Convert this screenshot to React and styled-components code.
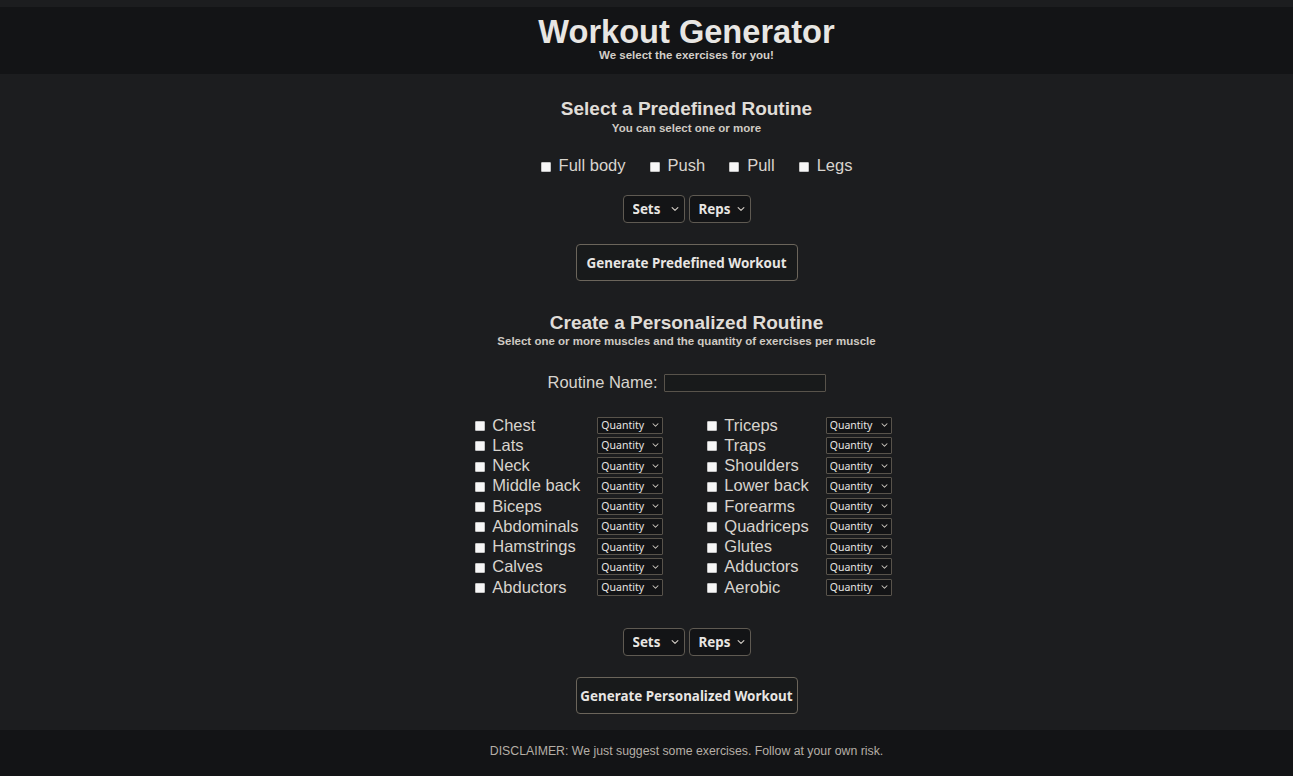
import React from "react";
import styled, { createGlobalStyle } from "styled-components";

const GlobalStyle = createGlobalStyle`
  html, body {
    margin: 0;
    padding: 0;
    background: #1c1d1f;
  }

  body {
    font-family: "Liberation Sans", Arial, sans-serif;
    color: #d8d4ce;
  }

  * {
    box-sizing: border-box;
  }
`;

const PREDEFINED = ["Full body", "Push", "Pull", "Legs"];

const LEFT_MUSCLES = [
  "Chest",
  "Lats",
  "Neck",
  "Middle back",
  "Biceps",
  "Abdominals",
  "Hamstrings",
  "Calves",
  "Abductors",
];

const RIGHT_MUSCLES = [
  "Triceps",
  "Traps",
  "Shoulders",
  "Lower back",
  "Forearms",
  "Quadriceps",
  "Glutes",
  "Adductors",
  "Aerobic",
];

const Chevron = ({ size = 8 }) => (
  <svg width={size} height={size * 0.6} viewBox="0 0 8 5" fill="none">
    <polyline points="1,1 4,4 7,1" stroke="#cfcac3" strokeWidth="1.2" strokeLinecap="round" strokeLinejoin="round" />
  </svg>
);

const Dropdown = ({ label, options, small }) => (
  <SelectBox $small={small}>
    <NativeSelect $small={small} defaultValue="">
      <option value="">{label}</option>
      {options.map((o) => (
        <option key={o} value={o}>
          {o}
        </option>
      ))}
    </NativeSelect>
    <ChevronSlot $small={small}>
      <Chevron size={small ? 7 : 8} />
    </ChevronSlot>
  </SelectBox>
);

const SetsReps = ({ top }) => (
  <SelectRow $top={top}>
    <Dropdown label="Sets" options={["1", "2", "3", "4", "5"]} />
    <Dropdown label="Reps" options={["5", "8", "10", "12", "15"]} />
  </SelectRow>
);

const MuscleColumn = ({ muscles }) => (
  <MuscleList>
    {muscles.map((m) => (
      <React.Fragment key={m}>
        <CheckLabel $gap={7}>
          <Checkbox type="checkbox" />
          {m}
        </CheckLabel>
        <Dropdown label="Quantity" options={["1", "2", "3", "4"]} small />
      </React.Fragment>
    ))}
  </MuscleList>
);

export default function App() {
  return (
    <>
      <GlobalStyle />
      <Page>
        <Header>
          <Title>Workout Generator</Title>
          <Tagline>We select the exercises for you!</Tagline>
        </Header>

        <Main>
          <SectionTitle $top={24}>Select a Predefined Routine</SectionTitle>
          <SectionNote $top={2}>You can select one or more</SectionNote>

          <CheckRow>
            {PREDEFINED.map((p) => (
              <CheckLabel key={p} $gap={8}>
                <Checkbox type="checkbox" />
                {p}
              </CheckLabel>
            ))}
          </CheckRow>

          <SetsReps top={20} />
          <ActionButton>Generate Predefined Workout</ActionButton>

          <SectionTitle $top={31}>Create a Personalized Routine</SectionTitle>
          <SectionNote $top={1}>Select one or more muscles and the quantity of exercises per muscle</SectionNote>

          <NameRow>
            <span>Routine Name:</span>
            <NameInput type="text" />
          </NameRow>

          <MuscleGrid>
            <MuscleColumn muscles={LEFT_MUSCLES} />
            <MuscleColumn muscles={RIGHT_MUSCLES} />
          </MuscleGrid>

          <SetsReps top={31} />
          <ActionButton>Generate Personalized Workout</ActionButton>
        </Main>

        <Footer>DISCLAIMER: We just suggest some exercises. Follow at your own risk.</Footer>
      </Page>
    </>
  );
}

const Page = styled.div`
  padding-top: 7px;
  min-height: 776px;
  display: flex;
  flex-direction: column;
`;

const Header = styled.header`
  background: #131416;
  padding: 6px 0 12px 80px;
  text-align: center;
`;

const Title = styled.h1`
  margin: 0;
  font-size: 32.6px;
  line-height: 38px;
  font-weight: 700;
  color: #e8e6e3;
`;

const Tagline = styled.p`
  margin: -2px 0 0;
  font-size: 11.5px;
  line-height: 13px;
  font-weight: 700;
  color: #d3cfc9;
`;

const Main = styled.main`
  padding-left: 80px;
  display: flex;
  flex-direction: column;
  align-items: center;
`;

const SectionTitle = styled.h2`
  margin: ${(p) => p.$top}px 0 0;
  font-size: 19px;
  line-height: 22px;
  font-weight: 700;
  color: #e0ddd8;
`;

const SectionNote = styled.p`
  margin: ${(p) => p.$top}px 0 0;
  font-size: 11.5px;
  line-height: 13px;
  font-weight: 700;
  color: #cfcac3;
`;

const CheckRow = styled.div`
  margin-top: 21px;
  padding-left: 20px;
  display: flex;
  gap: 24px;
`;

const CheckLabel = styled.label`
  display: flex;
  align-items: center;
  gap: ${(p) => p.$gap}px;
  white-space: nowrap;
  font-size: 16.5px;
  line-height: 19px;
  color: #d8d4ce;
`;

const Checkbox = styled.input`
  appearance: none;
  margin: 2px 0 0;
  width: 10px;
  height: 10px;
  flex: none;
  background: #f7f7f7;
  border: 1px solid #c4c4c4;
  border-radius: 1px;
`;

const SelectRow = styled.div`
  margin-top: ${(p) => p.$top}px;
  display: flex;
  gap: 4px;
`;

const SelectBox = styled.div`
  position: relative;
  display: inline-flex;
  width: ${(p) => (p.$small ? "66px" : "62px")};
  height: ${(p) => (p.$small ? "17px" : "28px")};
`;

const NativeSelect = styled.select`
  appearance: none;
  width: 100%;
  height: 100%;
  margin: 0;
  padding: ${(p) => (p.$small ? "0 0 0 3px" : "0 0 0 9px")};
  background: #131416;
  color: #e8e6e3;
  border: 1px solid ${(p) => (p.$small ? "#58534b" : "#5f5a52")};
  border-radius: ${(p) => (p.$small ? "1px" : "4px")};
  font-family: "Noto Sans", "Open Sans", sans-serif;
  font-size: ${(p) => (p.$small ? "10.5px" : "13.4px")};
  font-weight: ${(p) => (p.$small ? 400 : 700)};
  outline: none;
`;

const ChevronSlot = styled.span`
  position: absolute;
  right: ${(p) => (p.$small ? "4px" : "6px")};
  top: 50%;
  transform: translateY(-50%);
  display: flex;
  pointer-events: none;
`;

const ActionButton = styled.button`
  margin-top: 21px;
  width: 222px;
  height: 37px;
  padding: 0;
  background: #181a1b;
  color: #e8e6e3;
  border: 1px solid #6b655b;
  border-radius: 4px;
  font-family: "Noto Sans", "Open Sans", sans-serif;
  font-size: 13.4px;
  font-weight: 700;
`;

const NameRow = styled.div`
  margin-top: 24px;
  display: flex;
  align-items: center;
  gap: 6px;
  font-size: 16.5px;
  line-height: 19px;
  color: #d8d4ce;
`;

const NameInput = styled.input`
  width: 162px;
  height: 18px;
  margin: 2px 0 0;
  padding: 0 3px;
  background: #181a1b;
  border: 1px solid #58534b;
  border-radius: 1px;
  color: #e8e6e3;
  outline: none;
`;

const MuscleGrid = styled.div`
  margin-top: 23px;
  padding-right: 6px;
  display: flex;
  gap: 44px;
`;

const MuscleList = styled.div`
  display: grid;
  grid-template-columns: auto 66px;
  grid-auto-rows: 20.25px;
  column-gap: 17px;
  align-items: center;
`;

const Footer = styled.footer`
  margin-top: 16px;
  height: 47px;
  padding: 14px 0 0 80px;
  background: #131416;
  text-align: center;
  font-size: 12.3px;
  line-height: 14px;
  color: #b5afa6;
`;
